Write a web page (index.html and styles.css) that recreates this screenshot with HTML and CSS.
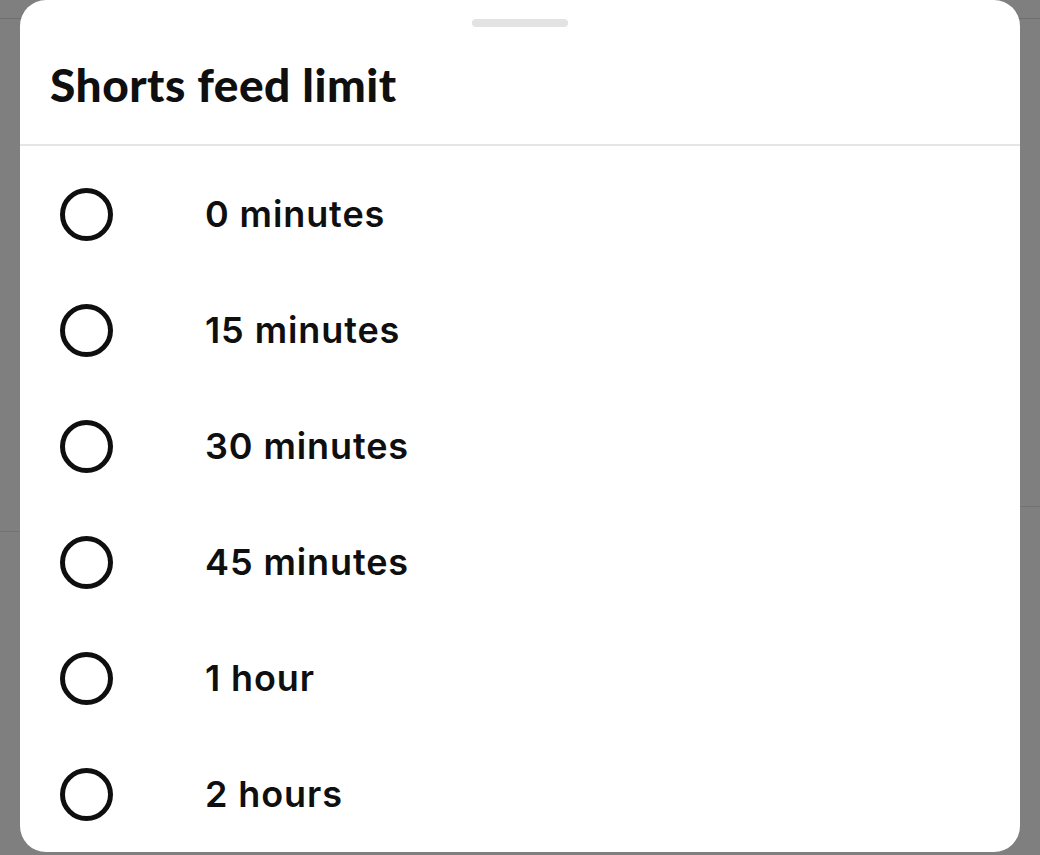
FILE: index.html
```html
<!DOCTYPE html>
<html lang="en">
<head>
<meta charset="utf-8">
<title>Shorts feed limit</title>
<link rel="stylesheet" href="styles.css">
</head>
<body>
<div class="backdrop">
  <section class="sheet">
    <div class="handle-wrap"><div class="handle"></div></div>
    <h1 class="title">Shorts feed limit</h1>
    <div class="divider"></div>
    <ul class="options">
      <li class="option"><span class="radio"></span><span class="label">0 minutes</span></li>
      <li class="option"><span class="radio"></span><span class="label">15 minutes</span></li>
      <li class="option"><span class="radio"></span><span class="label">30 minutes</span></li>
      <li class="option"><span class="radio"></span><span class="label">45 minutes</span></li>
      <li class="option"><span class="radio"></span><span class="label">1 hour</span></li>
      <li class="option"><span class="radio"></span><span class="label">2 hours</span></li>
    </ul>
  </section>
</div>
</body>
</html>
```
FILE: styles.css
```css
* { box-sizing: border-box; }
html, body {
  margin: 0;
  padding: 0;
  width: 1040px;
  height: 855px;
  overflow: hidden;
}
body {
  background: #7f7f7f;
  font-family: "Roboto", "Liberation Sans", sans-serif;
  color: #0f0f0f;
}
.backdrop {
  height: 855px;
  padding: 0 20px 3px 20px;
  background:
    linear-gradient(#6f6f6f, #6f6f6f) 0 18px / 100% 1px no-repeat,
    linear-gradient(#727272, #727272) 0 531px / 20px 1px no-repeat,
    linear-gradient(#727272, #727272) 1020px 506px / 20px 1px no-repeat,
    #7f7f7f;
}
.sheet {
  height: 852px;
  background: #ffffff;
  border-radius: 26px;
  display: flex;
  flex-direction: column;
  overflow: hidden;
}
.handle-wrap {
  display: flex;
  justify-content: center;
  padding-top: 19px;
}
.handle {
  width: 96px;
  height: 8px;
  border-radius: 4px;
  background: #e3e3e3;
}
.title {
  margin: 0;
  padding: 31px 0 0 30px;
  height: 118px;
  font-family: "Lato", "Roboto", sans-serif;
  font-weight: 900;
  font-size: 46px;
  line-height: 54px;
  letter-spacing: 0.5px;
  color: #0f0f0f;
}
.divider {
  height: 2px;
  background: #e5e5e5;
}
.options {
  list-style: none;
  margin: 0;
  padding: 10px 0 0 0;
}
.option {
  height: 116px;
  display: flex;
  align-items: center;
  padding-left: 40px;
}
.radio {
  width: 53px;
  height: 53px;
  border: 5px solid #0f0f0f;
  border-radius: 50%;
  flex: none;
}
.label {
  margin-left: 92px;
  font-family: "Inter", "Roboto", sans-serif;
  font-weight: 600;
  font-size: 36px;
  letter-spacing: 0.9px;
  color: #0f0f0f;
}
```
